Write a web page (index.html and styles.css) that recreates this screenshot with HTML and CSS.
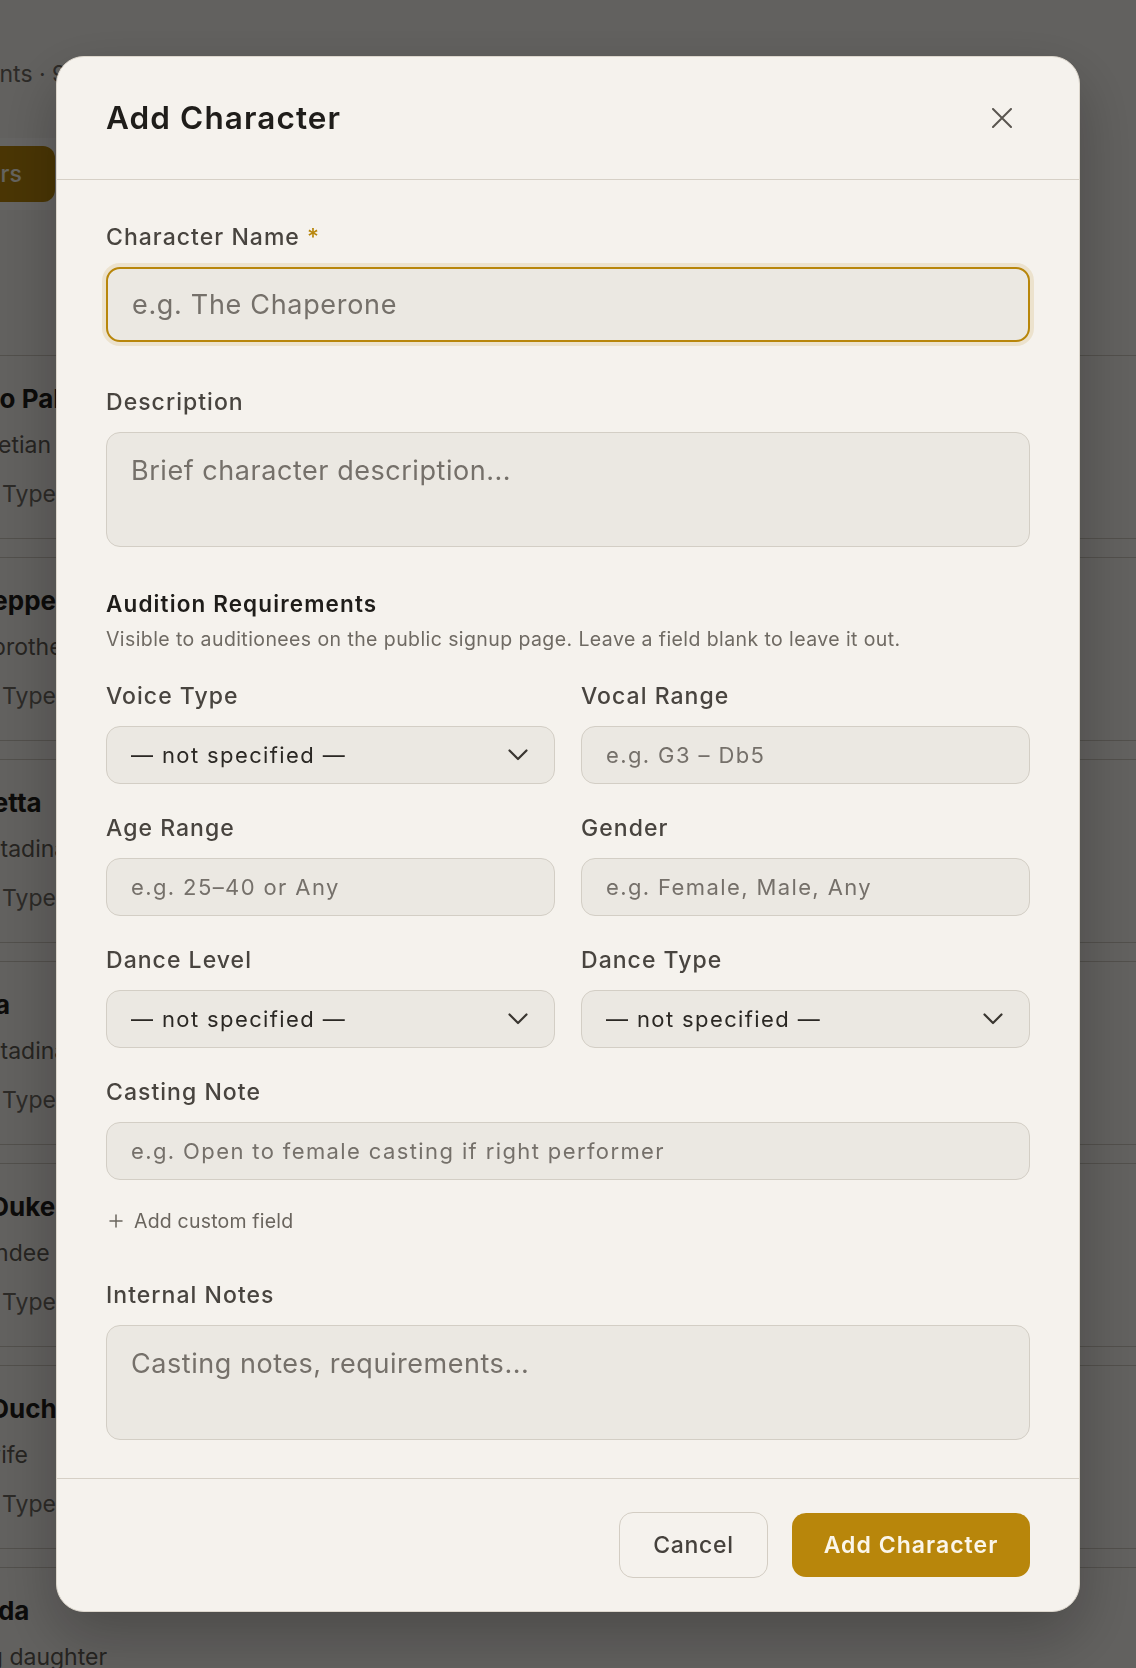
FILE: index.html
```html
<!DOCTYPE html>
<html lang="en">
<head>
<meta charset="utf-8">
<title>Add Character</title>
<link rel="stylesheet" href="styles.css">
</head>
<body>
<div class="page">
  <p class="meta">3 events · 9 characters</p>
  <div class="toolbar"><button class="page-btn">Filters</button></div>
  <ul class="char-list">
    <li class="char"><div class="char-name">Marco Palmieri</div><div class="char-sub">A Venetian</div><div class="char-type">Voice Type: Tenor</div></li>
    <li class="char"><div class="char-name">Giuseppe Palmieri</div><div class="char-sub">Twin brother</div><div class="char-type">Voice Type: Baritone</div></li>
    <li class="char"><div class="char-name">Gianetta</div><div class="char-sub">A Contadina</div><div class="char-type">Voice Type: Soprano</div></li>
    <li class="char"><div class="char-name">Tessa</div><div class="char-sub">A Contadina</div><div class="char-type">Voice Type: Mezzo</div></li>
    <li class="char"><div class="char-name">The Duke of Plaza-Toro</div><div class="char-sub">A Grandee</div><div class="char-type">Voice Type: Baritone</div></li>
    <li class="char"><div class="char-name">The Duchess of Plaza-Toro</div><div class="char-sub">The wife</div><div class="char-type">Voice Type: Contralto</div></li>
    <li class="char"><div class="char-name">Casilda</div><div class="char-sub">Young daughter</div><div class="char-type">Voice Type: Soprano</div></li>
  </ul>
</div>

<div class="overlay">
  <div class="modal" role="dialog" aria-labelledby="modal-title">
    <div class="modal-header">
      <h2 id="modal-title" class="modal-title">Add Character</h2>
      <button class="close-btn" aria-label="Close">
        <svg width="20" height="20" viewBox="0 0 20 20" fill="none" stroke="currentColor" stroke-width="2" stroke-linecap="round"><path d="M1 1 L19 19 M19 1 L1 19"/></svg>
      </button>
    </div>

    <div class="modal-body">
      <div class="field">
        <label class="label">Character Name <span class="req">*</span></label>
        <input class="input input-lg focused" type="text" placeholder="e.g. The Chaperone">
      </div>

      <div class="field field-gap">
        <label class="label">Description</label>
        <textarea class="input textarea" placeholder="Brief character description..."></textarea>
      </div>

      <section class="reqs">
        <h3 class="reqs-title">Audition Requirements</h3>
        <p class="reqs-sub">Visible to auditionees on the public signup page. Leave a field blank to leave it out.</p>
        <div class="grid">
          <div class="field">
            <label class="label">Voice Type</label>
            <div class="select-wrap">
              <select class="input input-sm select"><option>— not specified —</option></select>
              <svg class="chev" width="20" height="12" viewBox="0 0 20 12" fill="none" stroke="currentColor" stroke-width="2.2" stroke-linecap="round" stroke-linejoin="round"><path d="M1.5 1.5 L10 10 L18.5 1.5"/></svg>
            </div>
          </div>
          <div class="field">
            <label class="label">Vocal Range</label>
            <input class="input input-sm" type="text" placeholder="e.g. G3 – Db5">
          </div>
          <div class="field">
            <label class="label">Age Range</label>
            <input class="input input-sm" type="text" placeholder="e.g. 25–40 or Any">
          </div>
          <div class="field">
            <label class="label">Gender</label>
            <input class="input input-sm" type="text" placeholder="e.g. Female, Male, Any">
          </div>
          <div class="field">
            <label class="label">Dance Level</label>
            <div class="select-wrap">
              <select class="input input-sm select"><option>— not specified —</option></select>
              <svg class="chev" width="20" height="12" viewBox="0 0 20 12" fill="none" stroke="currentColor" stroke-width="2.2" stroke-linecap="round" stroke-linejoin="round"><path d="M1.5 1.5 L10 10 L18.5 1.5"/></svg>
            </div>
          </div>
          <div class="field">
            <label class="label">Dance Type</label>
            <div class="select-wrap">
              <select class="input input-sm select"><option>— not specified —</option></select>
              <svg class="chev" width="20" height="12" viewBox="0 0 20 12" fill="none" stroke="currentColor" stroke-width="2.2" stroke-linecap="round" stroke-linejoin="round"><path d="M1.5 1.5 L10 10 L18.5 1.5"/></svg>
            </div>
          </div>
          <div class="field span-2">
            <label class="label">Casting Note</label>
            <input class="input input-sm" type="text" placeholder="e.g. Open to female casting if right performer">
          </div>
        </div>
        <button class="add-field">
          <svg width="14" height="14" viewBox="0 0 14 14" fill="none" stroke="currentColor" stroke-width="1.5" stroke-linecap="round"><path d="M7 1 V13 M1 7 H13"/></svg>
          <span>Add custom field</span>
        </button>
      </section>

      <div class="field notes">
        <label class="label">Internal Notes</label>
        <textarea class="input textarea" placeholder="Casting notes, requirements..."></textarea>
      </div>
    </div>

    <div class="modal-footer">
      <button class="btn btn-secondary">Cancel</button>
      <button class="btn btn-primary">Add Character</button>
    </div>
  </div>
</div>
</body>
</html>
```

FILE: styles.css
```css
* { box-sizing: border-box; }

html, body {
  margin: 0;
  padding: 0;
  height: 100%;
}

body {
  font-family: Inter, "Liberation Sans", sans-serif;
  background: #f5f2ed;
  color: #2b2824;
  overflow: hidden;
}

/* ---------- background page ---------- */
.page {
  margin-left: -60px;
  padding-top: 58px;
}

.meta {
  margin: 0;
  font-size: 23px;
  line-height: 32px;
  color: #6f6a63;
}

.toolbar {
  margin-top: 48px;
  width: 220px;
  height: 72px;
  background: #fbf9f6;
  display: flex;
  align-items: center;
}

.page-btn {
  height: 56px;
  padding: 0 33px 0 14px;
  border: none;
  border-radius: 12px;
  background: #b8860b;
  color: #fbf6ea;
  font: 500 23px/1 Inter, sans-serif;
}

.char-list {
  list-style: none;
  margin: 145px 0 0;
  padding: 0;
  display: flex;
  flex-direction: column;
  gap: 18px;
}

.char {
  height: 184px;
  border-top: 1px solid #cdc7bd;
  border-bottom: 1px solid #cdc7bd;
  padding-top: 26px;
}

.char-name {
  font-size: 26px;
  font-weight: 700;
  line-height: 34px;
  color: #1f1d1a;
  text-indent: -5px;
}

.char-sub {
  margin-top: 13px;
  font-size: 23px;
  line-height: 32px;
  color: #5f5a53;
  text-indent: -6px;
}

.char-type {
  margin-top: 17px;
  font-size: 23px;
  line-height: 32px;
  color: #6f6a63;
  text-indent: -5px;
}

/* ---------- overlay & modal ---------- */
.overlay {
  position: fixed;
  inset: 0;
  background: rgba(0, 0, 0, 0.6);
  display: flex;
  padding: 56px;
}

.modal {
  flex: 1;
  display: flex;
  flex-direction: column;
  background: #f5f2ed;
  border: 1px solid #dcd6cc;
  border-radius: 28px;
  overflow: hidden;
  box-shadow: 0 24px 60px rgba(0, 0, 0, 0.25);
}

.modal-header {
  flex-shrink: 0;
  height: 123px;
  padding: 0 49px;
  display: flex;
  align-items: center;
  justify-content: space-between;
  border-bottom: 1px solid #d6d0c6;
}

.modal-title {
  margin: 0;
  font-size: 31.5px;
  font-weight: 600;
  line-height: 40px;
  color: #1f1d1a;
  letter-spacing: 0.035em;
}

.close-btn {
  width: 56px;
  height: 56px;
  border: none;
  background: transparent;
  color: #5a5650;
  display: flex;
  align-items: center;
  justify-content: center;
  padding: 0;
}

.modal-body {
  flex: 1;
  padding: 41px 49px 0;
}

.field {
  display: flex;
  flex-direction: column;
}

.field-gap { margin-top: 44px; }

.label {
  font-size: 23px;
  font-weight: 500;
  line-height: 32px;
  color: #48443f;
  letter-spacing: 0.045em;
  margin-bottom: 14px;
}

.req { color: #b8860b; }

.input {
  width: 100%;
  border: 1.5px solid #d3cec5;
  border-radius: 14px;
  background: #ebe8e2;
  padding: 0 24px;
  font-family: Inter, "Liberation Sans", sans-serif;
  color: #2b2824;
  outline: none;
  letter-spacing: 0.025em;
}

.input::placeholder { color: #75706a; opacity: 1; }

.input-lg {
  height: 75px;
  font-size: 27px;
}

.focused {
  border: 2px solid #b8860b;
  box-shadow: 0 0 0 4px rgba(184, 134, 11, 0.14);
}

.textarea {
  height: 115px;
  padding: 19px 24px 10px;
  font-size: 27px;
  line-height: 38px;
  letter-spacing: 0.02em;
  resize: none;
  display: block;
}

.input-sm {
  height: 58px;
  font-size: 22px;
  letter-spacing: 0.063em;
}

.select-wrap { position: relative; }

.select {
  appearance: none;
  -webkit-appearance: none;
  color: #2b2824;
}

.chev {
  position: absolute;
  right: 27px;
  top: 23px;
  color: #3a3631;
  pointer-events: none;
}

/* ---------- audition requirements ---------- */
.reqs { margin-top: 41px; }

.reqs-title {
  margin: 0;
  font-size: 22.5px;
  font-weight: 600;
  line-height: 32px;
  color: #1f1d1a;
  letter-spacing: 0.05em;
}

.reqs-sub {
  margin: 5px 0 0;
  font-size: 19.5px;
  line-height: 28px;
  color: #6f6a63;
  letter-spacing: 0.021em;
}

.grid {
  margin-top: 27px;
  display: grid;
  grid-template-columns: 1fr 1fr;
  column-gap: 26px;
  row-gap: 28px;
}

.span-2 { grid-column: 1 / -1; }

.add-field {
  margin-top: 27px;
  display: flex;
  align-items: center;
  gap: 11px;
  height: 28px;
  padding: 0 0 0 3px;
  border: none;
  background: transparent;
  color: #6a655e;
  font: 400 19.5px/28px Inter, sans-serif;
  letter-spacing: 0.01em;
}

.notes { margin-top: 44px; }

/* ---------- footer ---------- */
.modal-footer {
  flex-shrink: 0;
  border-top: 1px solid #d6d0c6;
  padding: 33px 49px;
  display: flex;
  justify-content: flex-end;
  gap: 24px;
}

.btn {
  height: 66px;
  border-radius: 14px;
  font-family: Inter, "Liberation Sans", sans-serif;
  font-size: 23px;
  letter-spacing: 0.03em;
  padding: 0;
}

.btn-secondary {
  width: 149px;
  background: transparent;
  border: 1.5px solid #d3cdc3;
  color: #45413c;
  font-weight: 500;
}

.btn-primary {
  width: 238px;
  height: 64px;
  margin-top: 1px;
  background: #b8860b;
  border: none;
  color: #fbf6ea;
  font-weight: 600;
  letter-spacing: 0.045em;
}
```
